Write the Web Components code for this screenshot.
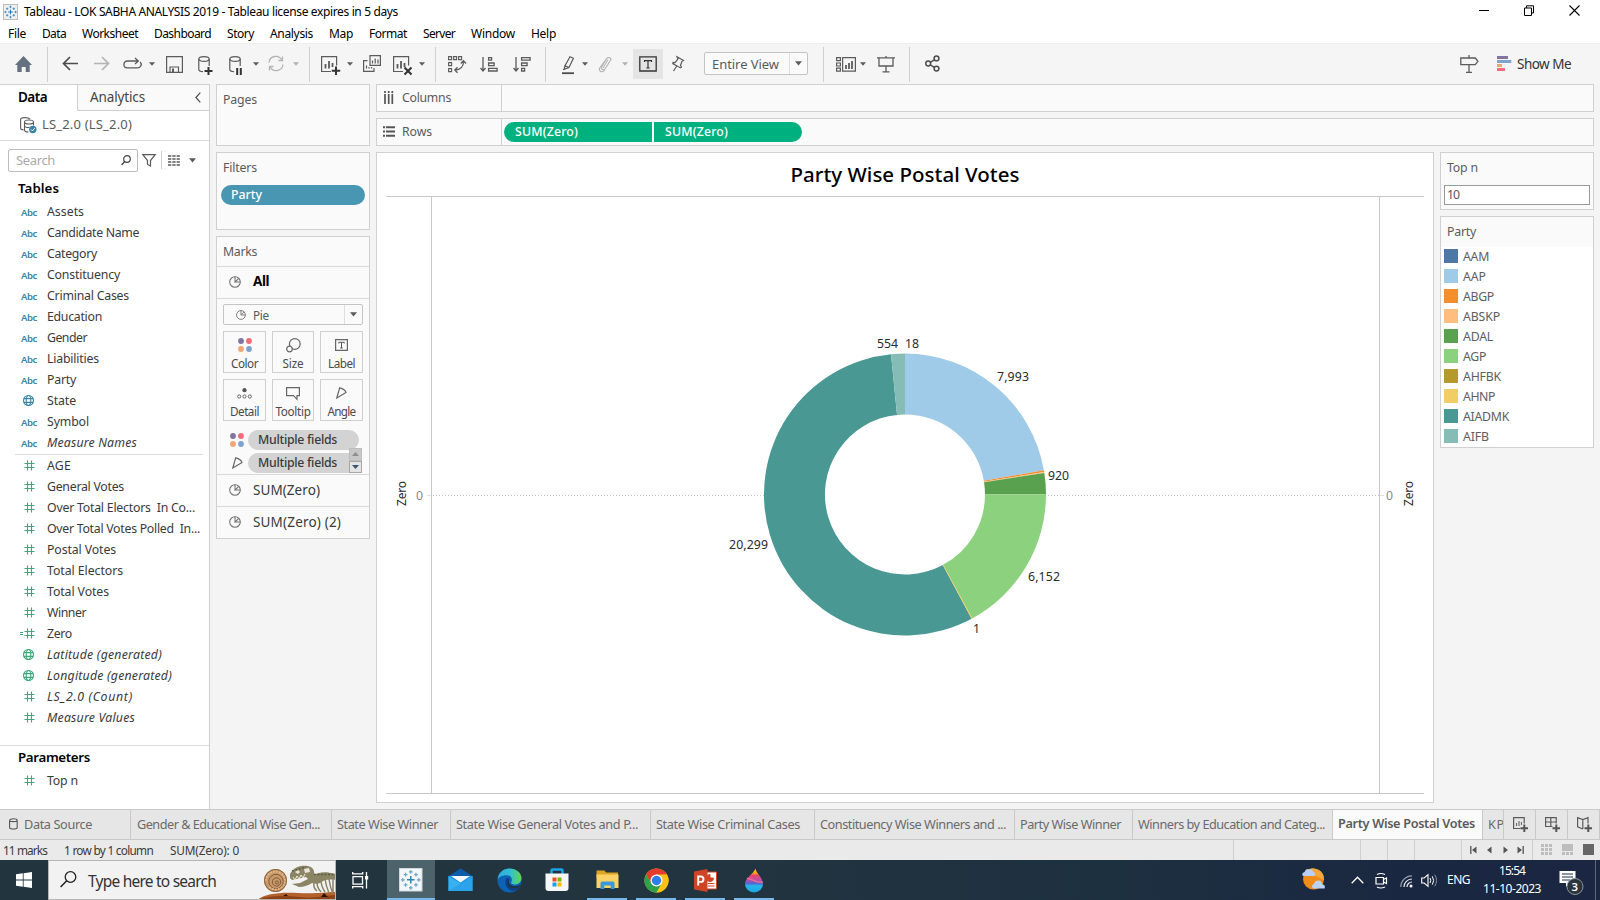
<!DOCTYPE html>
<html lang="en">
<head>
<meta charset="utf-8">
<title>Tableau - LOK SABHA ANALYSIS 2019</title>
<style>
html,body{margin:0;padding:0;width:1600px;height:900px;overflow:hidden;background:#f4f4f4;font-family:"Noto Sans","Open Sans",sans-serif;font-size:12.3px;color:#333}
</style>
</head>
<body>
<tableau-app></tableau-app>
<script>
const define = (name, css, html) => customElements.define(name, class extends HTMLElement {
  connectedCallback() {
    if (this.shadowRoot) return;
    const root = this.attachShadow({mode: 'open'});
    root.innerHTML = `<style>*{box-sizing:border-box}${css}</style>${typeof html === 'function' ? html(this) : html}`;
  }
});

/* Text whose tracking adapts to the width given in "w". */
customElements.define('fit-text', class extends HTMLElement {
  connectedCallback() {
    if (this.shadowRoot) return;
    const root = this.attachShadow({mode: 'open'});
    root.innerHTML = '<style>:host{display:inline-block;flex:none;white-space:pre}span{display:inline-block;white-space:pre;font-variant-ligatures:none}</style><span><slot></slot></span>';
    const w = +this.getAttribute('w');
    if (!w) return;
    const span = root.querySelector('span');
    const natural = span.getBoundingClientRect().width;
    span.style.letterSpacing = ((w - natural) / this.textContent.length) + 'px';
    this.style.width = w + 'px';
  }
});
const fit = (t, w, style = '') => `<fit-text w="${w}" style="${style}">${t}</fit-text>`;

/* Items [x, width, html, style] placed one after another in a flex row. */
const row = (items, start = 0) => {
  let end = start;
  return items.map(([x, w, html, style = '']) => {
    const m = x - end; end = x + w;
    return `<div class="cell" style="flex:none;display:flex;align-items:center;width:${w}px;margin-left:${m}px;${style}">${html}</div>`;
  }).join('');
};

const S = '#5b5b5b';
const pie = `<g fill="none" stroke="#757575" stroke-width="1.1"><circle cx="6" cy="6" r="5.3"/><path d="M6 .7V6L9.8 2.4M6 6h5.2"/></g>`;
const mkglobe = c => `<g fill="none" stroke="${c}" stroke-width="1.1"><circle cx="5.5" cy="5.5" r="5"/><ellipse cx="5.5" cy="5.5" rx="2.3" ry="5"/><path d="M.8 3.6h9.4M.8 7.4h9.4"/></g>`;
const dots = `<circle cx="3" cy="3" r="2.9" fill="#8074a0"/><circle cx="11" cy="3" r="2.9" fill="#fb6a7c"/><circle cx="3" cy="11" r="2.9" fill="#f2a377"/><circle cx="11" cy="11" r="2.9" fill="#7fa3cc"/>`;
const tlogo = (c1, c2) => `<g stroke="${c1}" stroke-width="1.6" fill="none"><path d="M12 8v8M8 12h8"/></g><g stroke="${c2}" stroke-width="1.3"><path d="M12 1.5v4M10 3.5h4M12 18.5v4M10 20.5h4M3.5 10v4M1.5 12h4M20.5 10v4M18.5 12h4M6.5 4.5v4M4.5 6.5h4M17.5 4.5v4M15.500 6.5h4M6.500 15.500v4M4.500 17.500h4M17.500 15.500v4M15.500 17.500h4"/></g>`;
const ICONS = {
  tableauSmall: [15, 16, `<rect x=".5" y=".5" width="14" height="15" fill="#f0f0f0" stroke="#bdbdbd"/><g transform="translate(.3,.8) scale(.6)">${tlogo('#1f77b4', '#2f7fb5')}</g>`],
  home: [17, 16, `<path d="M8.500 0L17 9h-2.300v7h-4v-5H6.700v5H2.300V9H0z" fill="#66717f"/>`],
  back: [16, 15, `<path d="M16 7.500H1.500M8 1L1.500 7.500 8 14" fill="none" stroke="#4d4d4d" stroke-width="1.7"/>`],
  fwd: [16, 15, `<path d="M0 7.500h14.500M8 1l6.500 6.500L8 14" fill="none" stroke="#b4b4b4" stroke-width="1.7"/>`],
  loop: [19, 13, `<path d="M5.500 4H4.300a3.400 3.400 0 0 0 0 6.800h10.400a3.400 3.400 0 0 0 2.500-5.800M5.500 4h9.500M12 1l3.300 3L12 7" fill="none" stroke="${S}" stroke-width="1.300"/>`],
  save: [17, 17, `<g fill="none" stroke="${S}" stroke-width="1.200"><path d="M.6.600h15.800v15.800H.600z"/><path d="M4 16v-5h8.500v5"/></g><path d="M6 12.500h2v3.500H6z" fill="${S}"/>`],
  dbplus: [15, 19, `<g fill="none" stroke="${S}" stroke-width="1.200"><ellipse cx="6" cy="3" rx="5.200" ry="2.400"/><path d="M.8 3v10.500c0 1.200 2 2 4.200 2.200M11.200 3v7"/></g><path d="M10.500 11v8M6.500 15h8" stroke="#333" stroke-width="2"/>`],
  dbpause: [14, 19, `<g fill="none" stroke="${S}" stroke-width="1.200"><ellipse cx="6" cy="3" rx="5.200" ry="2.400"/><path d="M.8 3v10.500c0 1.200 2 2 4.200 2.200M11.200 3v7"/></g><path d="M8.200 12v7M11.800 12v7" stroke="#333" stroke-width="2"/>`],
  refresh: [18, 17, `<g fill="none" stroke="#b4b4b4" stroke-width="1.300"><path d="M2 7.500A6.800 6.800 0 0 1 15 5.500M16 9.500A6.800 6.800 0 0 1 3 11.500"/><path d="M11.500 5.500h4v-4M6.500 11.500h-4v4"/></g>`],
  caret: [6, 4, `<path d="M0 .3h6L3 3.800z" fill="${S}"/>`],
  caretL: [6, 4, `<path d="M0 .3h6L3 3.800z" fill="#b0b0b0"/>`],
  caretB: [7, 5, `<path d="M0 .3h7L3.500 4.500z" fill="${S}"/>`],
  newsheet: [20, 19, `<path d="M10 15.500H.600V.600h15v9" fill="none" stroke="${S}" stroke-width="1.200"/><path d="M4.500 8v4.500M8 5v7.500M11.500 7v4" stroke="${S}" stroke-width="1.800"/><path d="M15 10.500v8.500M10.800 14.700h8.400" stroke="#333" stroke-width="2"/>`],
  dup: [18, 17, `<g fill="none" stroke="${S}" stroke-width="1.200"><path d="M7 .6h10.400v9.800H7z"/><path d="M4.500 5.600H.600v10.800H11v-3.500"/></g><path d="M9.500 5.500v3M12.200 3.500v5M15 4.500v4M3.500 10.500v3M6 12v1.500M8.500 12v1.500" stroke="${S}" stroke-width="1.200"/>`],
  clear: [20, 19, `<path d="M10 15.500H.600V.600h15v9" fill="none" stroke="${S}" stroke-width="1.200"/><path d="M4.500 8v4.500M8 5v7.500M11.500 7v4" stroke="${S}" stroke-width="1.800"/><path d="M11.500 11.500l7 7M18.500 11.500l-7 7" stroke="#333" stroke-width="2"/>`],
  swap: [18, 17, `<g fill="none" stroke="${S}" stroke-width="1.100"><path d="M.6.600h3v3h-3zM5.600.600h3v3h-3zM10.600.600h3v3h-3zM.6 6.600h3v3h-3zM.6 12.600h3v3h-3z"/><path d="M15.500 5.500c0 5-3 8.500-8.500 8.500M12.800 7.500l2.700-2.700 2.500 2.700M9.500 11.300L6.800 14l2.700 2.700" stroke-width="1.300"/></g>`],
  asc: [18, 17, `<g fill="none" stroke="${S}" stroke-width="1.300"><path d="M3 1v14M.6 12L3 15l2.500-3"/><path d="M8.600 1.600h3v2.600h-3zM8.600 7h5.500v2.600H8.600zM8.600 12.400h8.500V15H8.600z"/></g>`],
  desc: [18, 17, `<g fill="none" stroke="${S}" stroke-width="1.300"><path d="M3 1v14M.6 12L3 15l2.500-3"/><path d="M8.600 1.600h8.500v2.600H8.600zM8.600 7h5.500v2.600H8.600zM8.600 12.400h3V15h-3z"/></g>`],
  marker: [13, 19, `<g fill="none" stroke="${S}" stroke-width="1.200"><path d="M8 .8l3.400 1.400L7 11.500l-4-1.800zM3 9.700l-.8 3.500L7 11.500M1 13.500l3-.8"/></g><path d="M0 17.200h12" stroke="#4d4d4d" stroke-width="1.800"/>`],
  clip: [14, 17, `<path d="M12 5L7.200 12.700a2 2 0 0 1-3.500-2L8.500 2.600a2.300 2.300 0 0 1 4 2.400M10 3.500L5 12M9 2.200L2 11.500c-2 3 1.800 6 4.200 2.800L11.500 6" fill="none" stroke="#b4b4b4" stroke-width="1.100"/>`],
  tbox: [18, 16, `<path d="M.8.800h16.400v14.200H.800z" fill="none" stroke="#333" stroke-width="1.300"/><path d="M5.500 6V4.600h7V6M9 4.600V12M7.300 12h3.400" stroke="#333" stroke-width="1.200" fill="none"/>`],
  pin: [14, 16, `<path d="M6 .8l6.500 3.600-1.500.9-1.500 4 1 1.800-1 .8-7.700-4.300.2-1.100 2 .1L7 3 6 .800zM5.800 10L2.500 15" fill="none" stroke="${S}" stroke-width="1.200"/>`],
  cards: [20, 15, `<g fill="none" stroke="${S}" stroke-width="1.200"><path d="M.6.600h3.800v3H.600zM.6 6h3.800v3H.600zM.6 11.200h3.800v3H.600zM6.600.600h12.800v13.600H6.600z"/></g><path d="M10 8v4M13 6v6M16 4v8" stroke="${S}" stroke-width="1.800"/>`],
  present: [18, 17, `<g fill="none" stroke="${S}" stroke-width="1.300"><path d="M0 1.800h18M2 2v8h14V2M9 0v1.500M9 10v5.500M5.500 15.800h7"/></g>`],
  share: [15, 17, `<g fill="none" stroke="#4d4d4d" stroke-width="1.500"><circle cx="3.200" cy="8.500" r="2.400"/><circle cx="11.500" cy="3.400" r="2.400"/><circle cx="11.500" cy="13.600" r="2.400"/><path d="M5.300 7.300l4-2.500M5.300 9.800l4 2.500"/></g>`],
  sign: [19, 18, `<path d="M.8 3h14.500l2.600 3.300-2.600 3.400H.800zM9 0v3M9 9.700V17M6 17.300h6" fill="none" stroke="${S}" stroke-width="1.300"/>`],
  showme: [15, 16, `<path d="M0 0h11v3H0z" fill="#8074a0"/><path d="M0 4h14.300v3H0z" fill="#7fa3cc"/><path d="M0 8h5v3H0z" fill="#f2a377"/><path d="M0 12h8v3H0z" fill="#fb6a7c"/>`],
  chev: [6, 11, `<path d="M5.300.600L.9 5.500l4.400 4.900" fill="none" stroke="#555" stroke-width="1.300"/>`],
  ds: [17, 17, `<g fill="none" stroke="${S}" stroke-width="1.100"><path d="M10 2.200C9 1 7 .6 5 .6 2.600.600.600 1.400.600 2.500V11c0 1 1.200 1.700 3 1.900"/><ellipse cx="9" cy="5" rx="4.500" ry="2"/><path d="M4.500 5v8c0 1.200 2 2 4 2M13.500 5v3.500M4.500 9c1 1.500 3.500 1.800 5 1.200"/></g><circle cx="12.800" cy="12.500" r="3.700" fill="#3a83a8"/><path d="M11 12.500l1.400 1.400 2.300-2.700" fill="none" stroke="#fff"/>`],
  mag: [10, 11, `<circle cx="6" cy="4" r="3.300" fill="none" stroke="#444" stroke-width="1.200"/><path d="M3.700 6.500L.6 10" stroke="#444" stroke-width="1.300"/>`],
  filter: [14, 13, `<path d="M.8.700h12.400L8.500 6.500V12l-3-1.500v-4z" fill="none" stroke="${S}" stroke-width="1.200"/>`],
  list: [12, 11, `<path d="M0 1h12M0 4h12M0 7h12M0 10h12" stroke="${S}" stroke-width="1.300" stroke-dasharray="3.300 1"/>`],
  hash: [11, 11, `<path d="M3.500.500v10M7.500.500v10M.5 3.500h10M.5 7.500h10" stroke="#3fa77c" stroke-width="1.100"/>`],
  globeB: [11, 11, mkglobe('#3a87a8')],
  globeG: [11, 11, mkglobe('#3fa77c')],
  eqhash: [15, 11, `<path d="M7.500.500v10M11.500.500v10M4.500 3.500h10M4.500 7.500h10M0 4.500h3M0 6.500h3" stroke="#3fa77c" stroke-width="1.100"/>`],
  pie: [12, 12, pie],
  pieS: [10, 10, `<g transform="scale(.83)">${pie}</g>`],
  dots: [14, 14, dots],
  size: [15, 15, `<g fill="#fafafa" stroke="#666" stroke-width="1.200"><circle cx="8.800" cy="6" r="5.400"/><circle cx="3.500" cy="11" r="2.800"/></g>`],
  label: [13, 12, `<path d="M.6.600h11.800v10.800H.600z" fill="none" stroke="#666" stroke-width="1.200"/><path d="M3.800 4.500V3.300h5.400v1.200M6.500 3.300V9M5.200 9h2.600" stroke="#555" fill="none"/>`],
  detail: [15, 11, `<circle cx="7.500" cy="2.200" r="2.100" fill="#555"/><g fill="none" stroke="#666"><circle cx="2.200" cy="8.500" r="1.600"/><circle cx="7.500" cy="8.500" r="1.600"/><circle cx="12.800" cy="8.500" r="1.600"/></g>`],
  tip: [14, 13, `<path d="M.6.600h12.800v8H11v3.700L7.500 8.600H.600z" fill="none" stroke="#666" stroke-width="1.200"/>`],
  angle: [11, 12, `<path d="M.8 11L3.700.800Q9 2 10 5.500z" fill="none" stroke="#666" stroke-width="1.200"/>`],
  cols: [9, 13, `<path d="M1 0v2M4.700 0v2M8.300 0v2M1 3v10M4.700 3v10M8.300 3v10" stroke="#555" stroke-width="1.700"/>`],
  rows: [12, 11, `<path d="M0 1.300h2M3 1.300h9M0 5.500h2M3 5.500h9M0 9.700h2M3 9.700h9" stroke="#555" stroke-width="1.900"/>`],
  cyl: [9, 12, `<g fill="none" stroke="#555" stroke-width="1.100"><path d="M.6 2.500v7c0 2 7.600 2 7.600 0v-7c0-2.300-7.600-2.300-7.600 0c0 1.500 7.600 1.500 7.600 0"/></g>`],
  tsheet: [16, 15, `<path d="M7.500 11.500H.600V.600h10.600v6" fill="none" stroke="${S}" stroke-width="1.200"/><path d="M3.600 6v3M6 4v5M8.400 5v3" stroke="${S}"/><path d="M11.300 7.500v7.500M7.500 11.300H15" stroke="#555" stroke-width="2"/>`],
  tdash: [16, 15, `<path d="M7.500 9.500H.600V.600h10.600v6M.6 5h10.600M5.800.600v9" fill="none" stroke="${S}" stroke-width="1.200"/><path d="M11.300 7.500v7.500M7.500 11.300H15" stroke="#555" stroke-width="2"/>`],
  tstory: [16, 15, `<path d="M5.800 12L.6 9.800V.600L5.800 2.500 11 .6v6M5.800 2.500V12" fill="none" stroke="${S}" stroke-width="1.200"/><path d="M11.300 7.500v7.500M7.500 11.300H15" stroke="#555" stroke-width="2"/>`],
  first: [7, 8, `<path d="M.8 0v8" stroke="#555" stroke-width="1.300"/><path d="M6.500.500v7L2 4z" fill="#555"/>`],
  prev: [7, 8, `<path d="M5.500.500v7L1 4z" fill="#555"/>`],
  next: [7, 8, `<path d="M1.500.500v7L6 4z" fill="#555"/>`],
  last: [7, 8, `<path d="M6.200 0v8" stroke="#555" stroke-width="1.300"/><path d="M.5.500v7L5 4z" fill="#555"/>`],
  grid: [11, 11, `<path d="M0 1.500h11M0 5.500h11M0 9.500h11" stroke="#bdbdbd" stroke-width="3" stroke-dasharray="3 1"/>`],
  film: [11, 11, `<path d="M0 0h11v7H0z" fill="#bdbdbd"/><path d="M0 9.500h11" stroke="#bdbdbd" stroke-width="3" stroke-dasharray="3 1"/>`],
  full: [11, 11, `<path d="M0 0h11v11H0z" fill="#666"/>`],
  min: [10, 11, `<path d="M0 5.500h10" stroke="#000"/>`],
  restore: [10, 11, `<path d="M.5 3h7v7.500h-7zM2.500 3V.800h7V8H7.500" fill="none" stroke="#000"/>`],
  close: [11, 11, `<path d="M.5.500l10 10M10.500.500l-10 10" stroke="#000" stroke-width="1.100"/>`],
  win: [16, 16, `<path d="M0 2.300L6.800 1.300v6.300H0zM7.600 1.200L16 0v7.600H7.600zM0 8.400h6.800v6.300L0 13.700zM7.600 8.400H16V16L7.600 14.800z" fill="#fff"/>`],
  wmag: [17, 17, `<circle cx="10.500" cy="6" r="5.300" fill="none" stroke="#222" stroke-width="1.300"/><path d="M6.700 9.800L.6 16" stroke="#222" stroke-width="1.500"/>`],
  fossil: [77, 34, `<path d="M0 34c6-5 20-7 39-6s27-1 38-1v7z" fill="#b4622b"/><path d="M0 34c10-3 26-4 40-2s25-1 37-2v4z" fill="#8d4116"/><path d="M24 31l3-2 2 2zM62 32l3-4 4 4z" fill="#2a1208"/>
    <circle cx="16.500" cy="15.500" r="11.500" fill="#c79a6b"/><g fill="none" stroke="#865a34" stroke-width="1"><circle cx="16.500" cy="15.500" r="11"/><circle cx="17" cy="16.500" r="7.200"/><circle cx="17.500" cy="17" r="4.200"/><circle cx="18" cy="17.500" r="1.600"/><path stroke="#e2bd93" stroke-width="1.800" stroke-dasharray="1.500 1.500" d="M7 15.500a9.300 9.300 0 1 1 19 1a9.300 9.300 0 0 1-16 5"/></g>
    <path d="M31 9c4-7 10-9 18-8 5 1 7 5 6 9 6-4 14-3 22-1v6c-6-1-12-1-16 3-2 1-5 1-8 0-3 2-8 4-13 4l-7-3 8-1 8-4-2-2-14 3-2-2z" fill="#8b8465"/><path d="M36 7l3-2 2 2-2 2zM45 4l5-1 1 4-5 1z" fill="#e9e5d8"/><path d="M34 12l2 3 2-4 2 3 2-4 2 3 2-4" fill="none" stroke="#f0ecd6"/>
    <g stroke="#8b8465" stroke-width="1.500" fill="none"><path d="M55 17q-1 6 3 9M58 17q0 6 4 10M62 15q0 6 4 12M66 14q1 7 4 14M70 14q1 8 4 15M74 14v13"/></g><path d="M55 9.500h22M33 6l14-4" stroke="#5f5940" stroke-width="1.500" stroke-dasharray="2 1.500"/>`],
  taskview: [17, 17, `<g fill="none" stroke="#fff" stroke-width="1.300"><path d="M1 4.600h9.500v7.500H1zM.7 0v1.800h10V0M.7 16.500v-1.800h10v1.800M14.500 0v16.500"/></g><path d="M13 4h3.200v3.500H13z" fill="#fff"/>`],
  tbtab: [24, 24, `<rect x=".5" y=".5" width="22.500" height="22.500" fill="#f3f7fa" stroke="#cfd8dc"/><g transform="translate(.5,.5) scale(.94)">${tlogo('#2b86bd', '#6ba7cb')}</g>`],
  mail: [25, 24, `<path d="M.5 8L12.500.500 24.500 8v4h-24z" fill="#0b5cab"/><path d="M.5 8h24v15h-24z" fill="#1a93e0"/><path d="M.5 8l24 15h-24z" fill="#37b1f0"/><path d="M24.500 8L.5 23h24z" fill="#2ba2ea"/><path d="M3 8h19l-9.500 6.500z" fill="#f4f7fa"/>`],
  edge: [25, 25, `<defs><linearGradient id="e" x1="0" x2="1"><stop offset="0" stop-color="#2ba9e5"/><stop offset=".55" stop-color="#35bfd0"/><stop offset="1" stop-color="#61d64c"/></linearGradient></defs><circle cx="12.500" cy="12.500" r="12" fill="#0c62b5"/><path d="M.6 12C1 5 6 .5 12.500.500c7 0 12 4.500 12 9.500 0 4-3 6.500-7 6.500-3 0-4-1.500-3-3 1.500-3-1-6.300-5-6.300-5 0-8.500 2.300-8.900 4.800z" fill="url(#e)"/><path d="M9 11c-2 5 1 11 7 12 4-.5 7-3 8-5.500-3 2-7 2-10 0-2.500-1.500-3.500-4-1.500-6.500-1-1.500-3-1.500-3.500 0z" fill="#123f86"/><path d="M12.500 11.500c-1.500 2.500-.5 5 2 6 2.500 1 6 1 9-1 .5 1-1 2-1.500 2.500-4 2-8 1.500-10.500-1-1.700-2-1.500-5 1-6.500z" fill="#22333e"/>`],
  store: [24, 24, `<path d="M6.500 6V2.500q0-1 1-1h9q1 0 1 1V6" fill="none" stroke="#1aa5ea" stroke-width="2.500"/><path d="M.5 5.500h23V20q0 3-3 3h-17q-3 0-3-3z" fill="#f6f6f6"/><path d="M7.500 9.500h4v4h-4z" fill="#f04d24"/><path d="M12.500 9.500h4v4h-4z" fill="#7db700"/><path d="M7.500 14.500h4v4h-4z" fill="#1b9fe8"/><path d="M12.500 14.500h4v4h-4z" fill="#fdb700"/>`],
  folder: [23, 20, `<path d="M.5.500h8l1.500 2h12v5H.5z" fill="#e0a322"/><path d="M.5 4.500h22V18H.5z" fill="#fcd364"/><path d="M4.500 19v-6q0-1.500 1.500-1.500h11q1.500 0 1.500 1.500v6h-3.800v-3.500H8.300V19z" fill="#3c97e0"/>`],
  chrome: [25, 25, `<circle cx="12.500" cy="12.500" r="12" fill="#fbc116"/><path d="M2.100 6.500A12 12 0 0 1 22.900 6.500H12.500L7.300 15.500z" fill="#e33b2e"/><path d="M2.100 6.500A12 12 0 0 0 12.500 24.500L17.700 15.500H7.300z" fill="#2da14c"/><path d="M22.900 6.500A12 12 0 0 1 12.500 24.500L17.700 15.500 17 7z" fill="#fbc116"/><circle cx="12.500" cy="12.500" r="6" fill="#fff"/><circle cx="12.500" cy="12.500" r="4.700" fill="#2f7de8"/>`],
  ppt: [23, 23, `<path d="M12 3h10.500v17H12z" fill="#fff" stroke="#d14525"/><path d="M16 5.500a3.500 3.500 0 1 0 3.500 3.500H16zM14 14.500h6.500M14 17h6.500" fill="#d14525" stroke="#d14525"/><path d="M0 2.500L13.500 0v23L0 20.500z" fill="#cf4424"/><path d="M4.200 16.500v-9h2.600a2.700 2.700 0 0 1 0 5.400H4.200" fill="none" stroke="#fff" stroke-width="1.900"/>`],
  drop: [20, 25, `<defs><linearGradient id="d" x1="0" y1="0" x2="0" y2="1"><stop offset="0" stop-color="#ffd400"/><stop offset=".2" stop-color="#f7a21b"/><stop offset=".28" stop-color="#e9446d"/><stop offset=".45" stop-color="#c94c9e"/><stop offset=".62" stop-color="#5a63cf"/><stop offset=".72" stop-color="#25b7ea"/><stop offset="1" stop-color="#19a5e0"/></linearGradient></defs><path d="M11.500.500c0 4 7.500 9 7.500 15.500A9 8.500 0 0 1 1 16C1 10 9.500 6 11.500.500z" fill="url(#d)"/><path d="M3 10.500c5-1 8 5 15.800 3.500" fill="none" stroke="#ef6a92" stroke-width="1.500"/>`],
  weather: [25, 24, `<circle cx="12.500" cy="12" r="10.500" fill="#f08c18"/><path d="M5 4a10 10 0 0 1 10-2 10 10 0 0 1 8 11" fill="#f6a93a"/><path d="M2 9q-2-3 1.500-4Q5 .5 8.500 2.500 12 1.500 12 5q3.500.5 1.500 4z" fill="#b9cff3"/><path d="M12 21.500q-2.500-3 1-4.500.5-3.500 4.500-3.500 3 0 3.500 3.500 4 1 2.500 4.500z" fill="#bcd2f5"/>`],
  up: [13, 8, `<path d="M.7 7.200L6.500 1.300l5.800 5.900" fill="none" stroke="#fff" stroke-width="1.300"/>`],
  cam: [13, 17, `<g fill="none" stroke="#fff" stroke-width="1.200"><path d="M1 5.500h7.500v6.500H1zM8.500 7.500l3-1.500v5.500l-3-1.500M2 2.500q3.500-2 8 0M2 15q3.500 2 8 0"/></g>`],
  wifi: [13, 13, `<g fill="none" stroke-width="1.200"><path d="M.8 12A11.200 11.200 0 0 1 12 .8" stroke="#93a0ab"/><path d="M4 12A8 8 0 0 1 12 4M7 12A5 5 0 0 1 12 7" stroke="#e8ebee"/></g><circle cx="11" cy="11" r="1.500" fill="#fff"/>`],
  vol: [17, 15, `<path d="M.7 5h2.500L7 1.700v11.600L3.200 10H.700z" fill="none" stroke="#fff" stroke-width="1.100"/><g fill="none" stroke="#fff"><path d="M9 5q1.500 2.500 0 5M11.300 3.300q2.700 4.200 0 8.400"/><path d="M13.700 1.700q3.700 5.800 0 11.600" stroke="#8492a2"/></g>`],
  note: [25, 24, `<path d="M.5 0h16v12h-5L7 16v-4H.500z" fill="#fff"/><path d="M3 3h11M3 6h11M3 9h8" stroke="#1b2a42" stroke-width="1.200"/><circle cx="16" cy="15.500" r="8" fill="#2b333c" stroke="#8c949c"/>`],
};
define('ui-icon', ':host{display:block;flex:none;line-height:0}svg{display:block;overflow:visible}', el => {
  const [w, h, body] = ICONS[el.getAttribute('name')];
  return `<svg width="${w}" height="${h}" viewBox="0 0 ${w} ${h}">${body}</svg>`;
});
const ic = n => `<ui-icon name="${n}"></ui-icon>`;
const I = (x, n, style) => [x, ICONS[n][0], ic(n), style];
const T = (x, w, t, style) => [x, w, fit(t, w), style];

define('title-bar', ':host{display:flex;height:24px;background:#fff;color:#000;align-items:center;font-size:12px;line-height:24px}',
  row([I(3, 'tableauSmall', 'margin-top:-1px'), T(24, 374, 'Tableau - LOK SABHA ANALYSIS 2019 - Tableau license expires in 5 days'),
    I(1479, 'min', 'margin-top:-3px'), I(1524, 'restore', 'margin-top:-3px'), I(1569, 'close', 'margin-top:-3px')]));

define('menu-bar', ':host{display:flex;height:19px;background:#fff;color:#000;font-size:12px;line-height:19px}',
  row([[8,18,'File'],[42,24,'Data'],[82,56,'Worksheet'],[154,57,'Dashboard'],[227,27,'Story'],[270,43,'Analysis'],[329,24,'Map'],[369,38,'Format'],[423,32,'Server'],[471,44,'Window'],[531,25,'Help']].map(a => T(...a))));

const sep = x => [x, 1, '', 'height:35px;background:#d0d0d0'];
define('tool-bar', `:host{display:flex;height:41px;align-items:center;background:#f5f5f5;border-top:1px solid #eee;box-sizing:border-box}
  .tbtn{width:30px;height:30px;background:#e4e4e4;display:flex;align-items:center;justify-content:center}
  .sel{display:flex;width:104px;height:23px;border:1px solid #c4c4c4;border-radius:2px;background:#fafafa;align-items:center;font-size:13px;line-height:18px;color:#5a5a5a;margin-top:-1px}
  .sel i{width:1px;height:21px;background:#dedede}`,
  row([I(15,'home'), sep(47), I(62,'back','margin-top:-1px'), I(94,'fwd','margin-top:-1px'), I(123,'loop','margin-top:-2px'), I(149,'caret'), I(166,'save'), I(198,'dbplus','margin-top:2px'), I(229,'dbpause','margin-top:2px'), I(253,'caret'), I(267,'refresh','margin-top:-1px'), I(293,'caretL'), sep(309),
    I(321,'newsheet','margin-top:2px'), I(347,'caret'), I(363,'dup','margin-top:-2px'), I(393,'clear','margin-top:2px'), I(419,'caret'), sep(435), I(448,'swap'), I(480,'asc'), I(513,'desc'), sep(545),
    I(562,'marker','margin-top:2px'), I(582,'caret'), I(598,'clip'), I(622,'caretL'), [633,30,`<div class="tbtn">${ic('tbox')}</div>`], I(671,'pin','margin-top:-1px'),
    [704,104,`<div class="sel">${row([T(7,67,'Entire View'),[84,1,'<i></i>'],I(90,'caretB')])}</div>`], sep(823), I(836,'cards'), I(860,'caret'), I(877,'present'), sep(909), I(925,'share','margin-top:-1px'),
    I(1460,'sign'), I(1497,'showme'), [1517,55,fit('Show Me',54,'font-size:13.5px;color:#333'),'margin-top:-1px']]));

define('field-row', `:host{display:flex;height:21px;align-items:center;color:#3a3a3a;font-size:12.3px}
  :host([italic]) .n{font-style:italic}.k{width:28px;margin-left:19px;flex:none;display:flex;align-items:center}
  .abc{font-size:9.600px;font-weight:600;color:#3d85a3;margin-left:2px;padding-top:1px}`, el => {
  const k = el.getAttribute('kind');
  return `<div class="k">${k === 'abc' ? `<span class="abc">${fit('Abc', 16)}</span>` : `<span style="margin-left:${k === 'eqhash' ? 1 : k === 'hash' ? 5 : 4}px">${ic(k)}</span>`}</div><span class="n">${fit(el.getAttribute('label'), el.getAttribute('w'))}</span>`;
});
const fields = list => list.map(([l, w, k, it]) => `<field-row label="${l}" w="${w}" kind="${k}" ${it ? 'italic' : ''}></field-row>`).join('');
define('data-pane', `:host{display:flex;flex-direction:column;width:210px;background:#fff;border-right:1px solid #cfcfcf;border-top:1px solid #cfcfcf;flex:none;box-sizing:border-box}
  .tabs{display:flex;height:26px;line-height:25px}.a{width:77px;padding-left:18px;color:#000;font-weight:600;font-size:13.5px}
  .b{flex:1;background:#fafafa;border-left:1px solid #cfcfcf;border-bottom:1px solid #cfcfcf;display:flex;align-items:center;font-size:13.5px;color:#444}
  .ds{display:flex;height:30px;align-items:center;border-bottom:1px solid #dcdcdc;font-size:13px;color:#5a5a5a}
  .s{display:flex;height:40px;padding-bottom:2px;align-items:center}.in{display:flex;width:130px;height:23px;border:1px solid #bdbdbd;border-radius:2px;align-items:center;color:#aaa;font-size:13px;line-height:18px}
  h4{margin:0;font-size:13.3px;font-weight:600;color:#000;padding-left:18px;line-height:18px}hr{margin:1px 6px 0 15px;border:0;height:1px;background:#dcdcdc}
  .p{border-top:1px solid #dcdcdc;margin-top:17px;padding-top:2px}`,
  `<div class="tabs"><div class="a">${fit('Data',29)}</div><div class="b">${row([T(12,55,'Analytics'),I(117,'chev')])}</div></div>
  <div class="ds">${row([I(20,'ds','margin-top:-1px'),T(42,90,'LS_2.0 (LS_2.0)','margin-top:-3px')])}</div>
  <div class="s">${row([[8,130,`<div class="in">${row([T(7,39,'Search'),I(112,'mag')])}</div>`],I(142,'filter'),[161,1,'','height:18px;background:#d0d0d0'],I(168,'list'),I(189,'caretB')])}</div>
  <h4 style="margin-top:-2px">${fit('Tables',41)}</h4><div style="height:4px"></div>
  ${fields([['Assets',37,'abc'],['Candidate Name',92,'abc'],['Category',50,'abc'],['Constituency',73,'abc'],['Criminal Cases',82,'abc'],['Education',55,'abc'],['Gender',40,'abc'],['Liabilities',52,'abc'],['Party',29,'abc'],['State',29,'globeB'],['Symbol',42,'abc'],['Measure Names',90,'abc',1]])}
  <hr>
  ${fields([['AGE',24,'hash'],['General Votes',77,'hash'],['Over Total Electors&#160; In Co...',148,'hash'],['Over Total Votes Polled&#160; In...',153,'hash'],['Postal Votes',69,'hash'],['Total Electors',76,'hash'],['Total Votes',62,'hash'],['Winner',39,'hash'],['Zero',25,'eqhash'],['Latitude (generated)',115,'globeG',1],['Longitude (generated)',125,'globeG',1],['LS_2.0 (Count)',86,'hash',1],['Measure Values',88,'hash',1]])}
  <div class="p"><h4>${fit('Parameters',72)}</h4><div style="height:4px"></div>${fields([['Top n',31,'hash']])}</div>`);

define('shelf-card', ':host{display:block;border:1px solid #d0d0d0;background:#fafafa;flex:none}header{padding-left:6px;height:30px;line-height:30px;color:#5a5a5a;font-size:12.3px}',
  el => `<header>${fit(el.getAttribute('label'), el.getAttribute('w'))}</header><slot></slot>`);
define('field-pill', ':host{display:flex;height:20px;align-items:center;background:var(--bg);color:var(--fg,#fff);border-radius:var(--r,10px);padding-left:var(--pl,10px);padding-bottom:1px;box-sizing:border-box;font-weight:500;flex:none}', '<slot></slot>');
define('mark-button', ':host{display:flex;flex-direction:column;align-items:center;height:42px;border:1px solid #cfcfcf;background:#fafafa;font-size:11.7px;color:#4a4a4a;box-sizing:border-box}.i{height:25px;padding-top:1px;display:flex;align-items:center}.t{line-height:14px;margin-top:-1px}',
  el => `<div class="i">${ic(el.getAttribute('icon'))}</div><div class="t">${fit(el.getAttribute('label'), el.getAttribute('w'))}</div>`);
define('marks-card', `:host{display:block}.r{display:flex;height:32px;align-items:center;border-top:1px solid #d8d8d8;color:#3a3a3a;font-size:13.5px;padding-bottom:2px}
  .sel{display:flex;align-items:center;width:140px;height:21px;border:1px solid #c4c4c4;border-radius:2px;margin:5px 0 6px 6px;font-size:11.8px;color:#5a5a5a}
  .g{display:grid;grid-template-columns:43px 42px 43px;gap:6px;padding-left:6px}
  .l{display:flex;align-items:center;height:20px;--bg:#d3d3d3;--fg:#3a3a3a}
  .area{position:relative;height:176px;border-top:1px solid #d8d8d8;overflow:hidden}
  .sb{position:absolute;right:7px;top:149px;width:13px;height:25px;display:flex;flex-direction:column}
  .sb b{flex:1;border:1px solid #a8a8a8;background:#e4e4e4;display:flex;align-items:center;justify-content:center}.sb b:first-child{background:#c8c8c8;border-color:#bdbdbd}`,
  `<div class="r" style="margin-top:-1px">${row([I(12,'pie'),[36,30,fit('All',16,'font-weight:700;color:#000'),'margin-top:-1px']])}</div>
  <div class="area"><div class="sel">${row([I(12,'pieS'),T(29,16,'Pie'),[120,1,'','height:19px;background:#dedede'],I(126,'caretB')])}</div>
  <div class="g"><mark-button icon="dots" label="Color" w="27"></mark-button><mark-button icon="size" label="Size" w="21"></mark-button><mark-button icon="label" label="Label" w="27"></mark-button><mark-button icon="detail" label="Detail" w="29"></mark-button><mark-button icon="tip" label="Tooltip" w="35"></mark-button><mark-button icon="angle" label="Angle" w="28"></mark-button></div>
  <div class="l" style="margin-top:9px">${row([I(13,'dots'),[31,111,`<field-pill style="width:111px;--pl:10px">${fit('Multiple fields',79)}</field-pill>`]])}</div>
  <div class="l" style="margin-top:3px">${row([I(15,'angle','margin-top:-1px'),[31,111,`<field-pill style="width:111px;--pl:10px">${fit('Multiple fields',79)}</field-pill>`]])}</div>
  <div class="sb"><b><svg width="7" height="4"><path d="M0 4h7L3.500 0z" fill="#8f8f8f"/></svg></b><b><svg width="7" height="4"><path d="M0 0h7L3.500 4z" fill="#3f5470"/></svg></b></div></div>
  <div class="r">${row([I(12,'pie'),T(36,67,'SUM(Zero)')])}</div><div class="r">${row([I(12,'pie'),T(36,88,'SUM(Zero) (2)')])}</div>`);

define('axis-shelf', ':host{display:flex;height:28px;border:1px solid #d0d0d0;background:#fafafa;flex:none;box-sizing:border-box;--bg:#00b180}.h{display:flex;align-items:center;width:125px;border-right:1px solid #d0d0d0;color:#5a5a5a;padding-bottom:2px}.c{display:flex;align-items:center;gap:2px;padding-left:2px;font-size:12.3px}',
  el => `<div class="h">${row([I(+el.getAttribute('ix'), el.getAttribute('icon')), T(25, +el.getAttribute('w'), el.getAttribute('label'))])}</div><div class="c"><slot></slot></div>`);

define('donut-view', ':host{display:block;flex:1;background:#fff;border:1px solid #d0d0d0;box-sizing:border-box;min-height:0}h1{margin:0;height:43px;line-height:43px;text-align:center;font-size:20.5px;font-weight:500;color:#000}svg{display:block}', () => {
  const cx = 528, cy = 298.5, R = 141, r = 80;
  const p = (a, q) => { a = a * Math.PI / 180; return `${(cx + q * Math.sin(a)).toFixed(2)} ${(cy - q * Math.cos(a)).toFixed(2)}`; };
  const seg = (a, b, c) => `<path fill="${c}" d="M${p(a,R)}A${R} ${R} 0 ${b-a>180?1:0} 1 ${p(b,R)}L${p(b,r)}A${r} ${r} 0 ${b-a>180?1:0} 0 ${p(a,r)}z"/>`;
  const lab = (x, w, y, t) => `<text x="${x-377}" y="${y-196+4.5}" textLength="${w}" lengthAdjust="spacing">${t}</text>`;
  return `<h1>${fit('Party Wise Postal Votes',229)}</h1>
  <svg width="1056" height="605" font-family="Noto Sans,Open Sans,sans-serif" font-size="12.3" fill="#2a2a2a">
  <g stroke="#c8c8c8" shape-rendering="crispEdges"><path d="M9 .5h1038M9 597.500h1038M54.500 1v596M1002.500 1v596"/></g>
  <path d="M50 299.500h4M1003 299.500h4" stroke="#e0e0e0"/><path d="M56 299.500H1002" stroke="#c4c4c4" stroke-dasharray="1 2"/>
  <circle cx="${cx}" cy="${cy}" r="${r}" fill="#fff"/>
  ${seg(0,80.1,'#a0cbe8')}${seg(80.1,80.8,'#f28e2b')}${seg(80.8,81.2,'#ffbe7d')}${seg(81.2,89.9,'#59a14f')}${seg(89.9,151.6,'#8cd17d')}${seg(151.8,354.3,'#499894')}${seg(151.4,151.8,'#f1ce63')}${seg(354.3,360,'#86bcb6')}
  ${lab(877,21,343,'554')}${lab(905,14,343,'18')}${lab(997,32,376.5,'7,993')}${lab(1048,21,475.5,'920')}${lab(1028,32,576.5,'6,152')}${lab(973,7,628,'1')}${lab(729,39,544.5,'20,299')}
  <g fill="#888"><text x="39" y="304">0</text><text x="1009" y="304">0</text></g>
  <g font-size="12"><text transform="translate(29,310) rotate(-90)" textLength="25">Zero</text><text transform="translate(1036,310) rotate(-90)" textLength="25">Zero</text></g></svg>`;
});

define('param-card', ':host{display:block}.i{height:20px;margin:2px 3px 0 3px;border:1px solid #999;background:#fff;line-height:18px;padding-left:2px;color:#555}', `<div class="i">${fit('10',12)}</div>`);
define('color-legend', ':host{display:block;background:#fff;padding-top:2px;height:200px;box-sizing:border-box}.r{display:flex;height:20px;color:#5e5e5e;align-items:flex-start;font-size:12.3px;line-height:16px}i{width:14px;height:14px;margin:0 5px 0 3px}',
  [['AAM','#4e79a7',26],['AAP','#a0cbe8',23],['ABGP','#f28e2b',31],['ABSKP','#ffbe7d',37],['ADAL','#59a14f',30],['AGP','#8cd17d',23],['AHFBK','#b6992d',38],['AHNP','#f1ce63',32],['AIADMK','#499894',46],['AIFB','#86bcb6',26]].map(([t,c,w]) => `<div class="r"><i style="background:${c}"></i>${fit(t,w)}</div>`).join(''));

define('work-space', `:host{display:flex;height:725px;background:#f4f4f4}.m{width:154px;margin-left:6px;display:flex;flex-direction:column;gap:6px}
  .r{width:1218px;margin-left:6px;display:flex;flex-direction:column;gap:6px;padding-bottom:6px}.v{display:flex;gap:6px;flex:1;min-height:0;align-items:stretch}.s{width:154px;display:flex;flex-direction:column;gap:6px}`,
  `<data-pane></data-pane><div class="m"><shelf-card label="Pages" w="34" style="height:62px;box-sizing:border-box"></shelf-card>
  <shelf-card label="Filters" w="34" style="height:78px;box-sizing:border-box"><field-pill style="--bg:#4996b2;margin:2px 4px 0 4px">${fit('Party',31)}</field-pill></shelf-card>
  <shelf-card label="Marks" w="34" style="height:303px;box-sizing:border-box"><marks-card></marks-card></shelf-card></div>
  <div class="r"><axis-shelf ix="7" icon="cols" label="Columns" w="49"></axis-shelf><axis-shelf ix="6" icon="rows" label="Rows" w="30">
  <field-pill style="width:148px;--pl:11px;--r:10px 0 0 10px">${fit('SUM(Zero)',63)}</field-pill><field-pill style="width:148px;--r:0 10px 10px 0;--pl:11px">${fit('SUM(Zero)',63)}</field-pill></axis-shelf>
  <div class="v"><donut-view style="flex:none;width:1058px"></donut-view><div class="s"><shelf-card label="Top n" w="31" style="height:58px;box-sizing:border-box"><param-card></param-card></shelf-card>
  <shelf-card label="Party" w="29" style="height:232px;box-sizing:border-box"><color-legend></color-legend></shelf-card></div></div></div>`);

define('sheet-tabs', `:host{display:flex;height:31px;background:#e6e6e6;border-top:1px solid #c9c9c9;border-bottom:1px solid #c9c9c9;color:#6a6a6a;font-size:12.7px;overflow:hidden;box-sizing:border-box}
  .t{flex:none;display:flex;align-items:center;border-right:1px solid #c9c9c9;overflow:hidden;padding-bottom:2px}.on{background:#fafafa;color:#5a5a5a;font-weight:600;padding-bottom:4px}.ico{padding-bottom:0}`,
  (() => { let x = 0; return [[131,9,`${ic('cyl')}<span style="width:6px"></span>${fit('Data Source',68)}`],[332,137,fit('Gender &amp; Educational Wise Gen...',183)],[451,337,fit('State Wise Winner',101)],[651,456,fit('State Wise General Votes and P...',182)],[815,656,fit('State Wise Criminal Cases',144)],[1015,820,fit('Constituency Wise Winners and ...',186)],[1133,1020,fit('Party Wise Winner',101)],[1333,1138,fit('Winners by Education and Categ...',187)],[1483,1338,fit('Party Wise Postal Votes',137),'on'],[1504,1488,fit('KP',17)],[1536,1513,ic('tsheet'),'ico'],[1568,1545,ic('tdash'),'ico'],[1600,1577,ic('tstory'),'ico']].map(([e,s,h,c]) => { const o = `<div class="t ${c||''}" style="width:${e-x}px;padding-left:${s-x}px">${h}</div>`; x = e; return o; }).join(''); })());
const ss = x => [x, 1, '', 'height:20px;background:#cfcfcf'];
define('status-bar', ':host{display:flex;height:20px;background:#eaeaea;align-items:center;font-size:11.8px;line-height:16px;color:#3a3a3a}',
  row([T(3,44,'11 marks'),T(64,89,'1 row by 1 column'),T(170,69,'SUM(Zero): 0'),ss(1233),ss(1360),ss(1387),ss(1414),ss(1461),I(1470,'first','margin-top:-1px'),I(1486,'prev','margin-top:-1px'),I(1502,'next','margin-top:-1px'),I(1517,'last','margin-top:-1px'),ss(1532),I(1541,'grid','margin-top:-1px'),I(1562,'film','margin-top:-1px'),I(1583,'full','margin-top:-1px')]));

const app = (x, w, n, cls = '') => [x, w, `<div class="app ${cls}">${ic(n)}</div>`];
define('task-bar', `:host{display:flex;height:40px;align-items:center;background:linear-gradient(90deg,#22353e 0,#22343f 45%,#1d3040 70%,#1a2741 88%,#1b2742);color:#fff;font-family:"Noto Sans","Open Sans",sans-serif}
  .search{display:flex;width:288px;height:40px;background:#f2f2f2;border:1px solid #b5b5b5;align-items:center;color:#333;font-size:15.5px;overflow:hidden}
  .app{width:100%;height:40px;display:flex;align-items:center;justify-content:center}.run{border-bottom:2px solid #76b9ed;padding-top:2px}.act{background:#4d636b}
  .clk{display:flex;flex-direction:column;align-items:center;width:58px;font-size:12px;line-height:18.500px}
  .n{position:relative}.n span{position:absolute;left:12.500px;top:8px;font-size:11.5px;line-height:16px;font-weight:600}`,
  row([I(16,'win'),[48,288,`<div class="search">${row([I(11,'wmag','margin-top:-2px'),T(39,128,'Type here to search','margin-top:1px'),I(210,'fossil','margin-top:4px')])}</div>`],I(352,'taskview'),
    app(387,48,'tbtab','run act'),app(440,40,'mail'),app(489,40,'edge'),app(537,40,'store'),app(587,40,'folder','run'),app(636,40,'chrome','run'),app(685,40,'ppt','run'),app(734,40,'drop','run'),
    I(1301,'weather','margin-top:-2px'),I(1351,'up'),I(1375,'cam'),I(1400,'wifi','margin-top:3px'),I(1421,'vol'),[1447,24,fit('ENG',23,'font-size:12px'),'margin-top:-1px'],
    [1483,59,`<div class="clk">${fit('15:54',26)}${fit('11-10-2023',58)}</div>`],[1559,25,`<div class="n">${ic('note')}<span>3</span></div>`,'margin-top:6px'],[1595,1,'','height:40px;background:#5d6879']]));

define('tableau-app', ':host{display:flex;flex-direction:column;width:1600px;height:900px}:host>*{flex:none}', '<title-bar></title-bar><menu-bar></menu-bar><tool-bar></tool-bar><work-space></work-space><sheet-tabs></sheet-tabs><status-bar></status-bar><task-bar></task-bar>');
</script>
</body>
</html>
